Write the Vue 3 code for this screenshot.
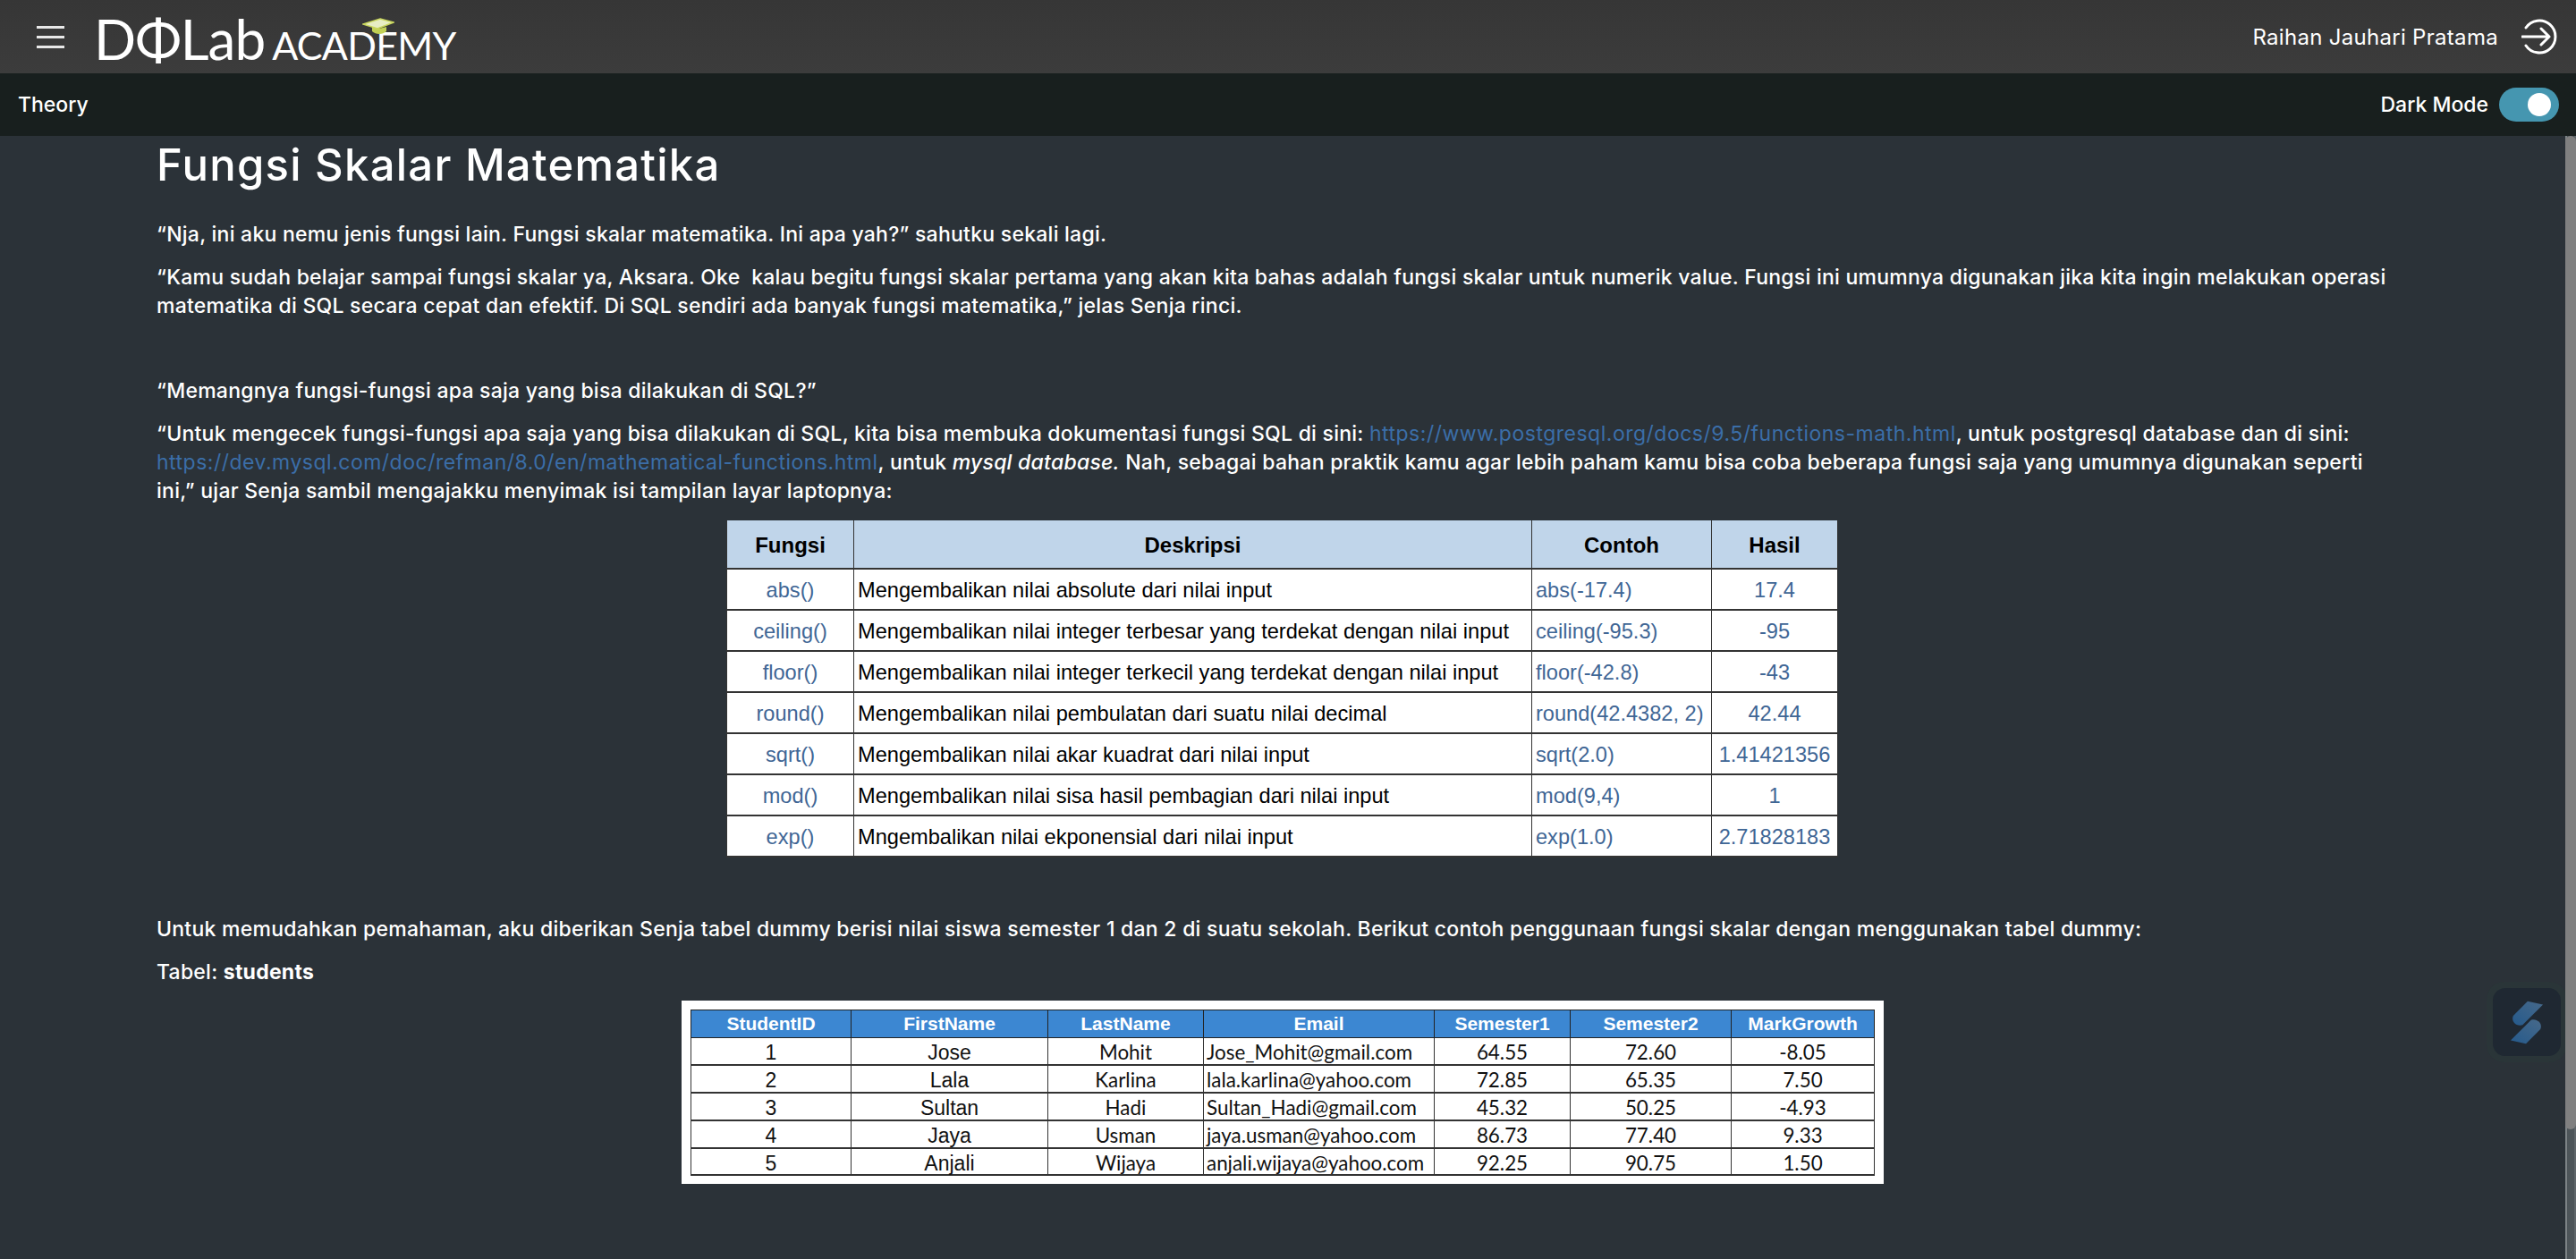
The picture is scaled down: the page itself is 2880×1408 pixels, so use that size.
<script setup>
const fnRows = [
  ['abs()', 'Mengembalikan nilai absolute dari nilai input', 'abs(-17.4)', '17.4'],
  ['ceiling()', 'Mengembalikan nilai integer terbesar yang terdekat dengan nilai input', 'ceiling(-95.3)', '-95'],
  ['floor()', 'Mengembalikan nilai integer terkecil yang terdekat dengan nilai input', 'floor(-42.8)', '-43'],
  ['round()', 'Mengembalikan nilai pembulatan dari suatu nilai decimal', 'round(42.4382, 2)', '42.44'],
  ['sqrt()', 'Mengembalikan nilai akar kuadrat dari nilai input', 'sqrt(2.0)', '1.41421356'],
  ['mod()', 'Mengembalikan nilai sisa hasil pembagian dari nilai input', 'mod(9,4)', '1'],
  ['exp()', 'Mngembalikan nilai ekponensial dari nilai input', 'exp(1.0)', '2.71828183'],
]

const students = [
  [1, 'Jose', 'Mohit', 'Jose_Mohit@gmail.com', '64.55', '72.60', '-8.05'],
  [2, 'Lala', 'Karlina', 'lala.karlina@yahoo.com', '72.85', '65.35', '7.50'],
  [3, 'Sultan', 'Hadi', 'Sultan_Hadi@gmail.com', '45.32', '50.25', '-4.93'],
  [4, 'Jaya', 'Usman', 'jaya.usman@yahoo.com', '86.73', '77.40', '9.33'],
  [5, 'Anjali', 'Wijaya', 'anjali.wijaya@yahoo.com', '92.25', '90.75', '1.50'],
]
</script>

<template>
  <div class="page">
    <header class="topbar">
      <div class="brand">
        <button class="burger" aria-label="menu"><span></span><span></span><span></span></button>
        <div class="logo">
          <span class="logo-main">DΦLab</span>
          <span class="logo-sub">ACADEMY</span>
          <svg class="logo-cap" viewBox="0 0 36 20" width="36" height="20">
            <path d="M11 9v6c4 4 12 4 16 0V10l-8 2z" fill="#c3d155" />
            <path d="M20 1 35 5 17 12 1 7z" fill="#e8edc4" stroke="#c9d65e" stroke-width="1.5" />
          </svg>
        </div>
      </div>
      <div class="user">
        <span>Raihan Jauhari Pratama</span>
        <svg viewBox="0 0 40 40" width="40" height="40" fill="none" stroke="#fff" stroke-width="3" stroke-linecap="round" stroke-linejoin="round">
          <path d="M5 10A18 18 0 1 1 5 30" />
          <path d="M1 20H31M22 11l9 9-9 9" />
        </svg>
      </div>
    </header>

    <div class="subbar">
      <span class="theory">Theory</span>
      <div class="mode">
        <span>Dark Mode</span>
        <div class="toggle"><i></i></div>
      </div>
    </div>

    <main class="content">
      <article class="article">
        <h1>Fungsi Skalar Matematika</h1>
        <p>“Nja, ini aku nemu jenis fungsi lain. Fungsi skalar matematika. Ini apa yah?” sahutku sekali lagi.</p>
        <p>“Kamu sudah belajar sampai fungsi skalar ya, Aksara. Oke&nbsp; kalau begitu fungsi skalar pertama yang akan kita bahas adalah fungsi skalar untuk numerik value. Fungsi ini umumnya digunakan jika kita ingin melakukan operasi<br>matematika di SQL secara cepat dan efektif. Di SQL sendiri ada banyak fungsi matematika,” jelas Senja rinci.</p>
        <p class="gap">“Memangnya fungsi-fungsi apa saja yang bisa dilakukan di SQL?”</p>
        <p>“Untuk mengecek fungsi-fungsi apa saja yang bisa dilakukan di SQL, kita bisa membuka dokumentasi fungsi SQL di sini: <a>https://www.postgresql.org/docs/9.5/functions-math.html</a>, untuk postgresql database dan di sini:<br><a>https://dev.mysql.com/doc/refman/8.0/en/mathematical-functions.html</a>, untuk <em>mysql database.</em> Nah, sebagai bahan praktik kamu agar lebih paham kamu bisa coba beberapa fungsi saja yang umumnya digunakan seperti<br>ini,” ujar Senja sambil mengajakku menyimak isi tampilan layar laptopnya:</p>

        <table class="fn-table">
          <thead>
            <tr><th>Fungsi</th><th>Deskripsi</th><th>Contoh</th><th>Hasil</th></tr>
          </thead>
          <tbody>
            <tr v-for="row in fnRows" :key="row[0]">
              <td class="blue center">{{ row[0] }}</td>
              <td>{{ row[1] }}</td>
              <td class="blue">{{ row[2] }}</td>
              <td class="blue center">{{ row[3] }}</td>
            </tr>
          </tbody>
        </table>

        <p class="after-table">Untuk memudahkan pemahaman, aku diberikan Senja tabel dummy berisi nilai siswa semester 1 dan 2 di suatu sekolah. Berikut contoh penggunaan fungsi skalar dengan menggunakan tabel dummy:</p>
        <p>Tabel: <strong>students</strong></p>

        <div class="students-wrap">
          <table class="students">
            <thead>
              <tr><th>StudentID</th><th>FirstName</th><th>LastName</th><th>Email</th><th>Semester1</th><th>Semester2</th><th>MarkGrowth</th></tr>
            </thead>
            <tbody>
              <tr v-for="s in students" :key="s[0]">
                <td class="center">{{ s[0] }}</td>
                <td class="center">{{ s[1] }}</td>
                <td class="center calibri">{{ s[2] }}</td>
                <td class="calibri">{{ s[3] }}</td>
                <td class="center calibri">{{ s[4] }}</td>
                <td class="center calibri">{{ s[5] }}</td>
                <td class="center calibri">{{ s[6] }}</td>
              </tr>
            </tbody>
          </table>
        </div>
      </article>

      <div class="widget">
        <div class="widget-inner">
          <svg viewBox="0 0 40 52" width="38" height="51">
            <defs>
              <linearGradient id="sg" x1="0" y1="1" x2="1" y2="0">
                <stop offset="0" stop-color="#255a8c" />
                <stop offset="1" stop-color="#47698a" />
              </linearGradient>
            </defs>
            <path d="M21 1 39 5 15 29C8 31 1 25 4 18z" fill="url(#sg)" />
            <path d="M19 51 1 47 25 23C32 21 39 27 36 34z" fill="url(#sg)" />
          </svg>
        </div>
      </div>

      <div class="scrollbar"><div class="thumb"></div></div>
    </main>
  </div>
</template>

<style scoped>
.page {
  height: 1408px;
  display: flex;
  flex-direction: column;
  font-family: Inter, "Noto Sans", sans-serif;
  color: #fff;
  background: #2b3238;
  overflow: hidden;
}

.topbar {
  height: 82px;
  flex: none;
  display: flex;
  align-items: center;
  justify-content: space-between;
  padding: 0 21px 0 41px;
  background: linear-gradient(#363636, #3c3c3c);
}

.brand {
  display: flex;
  align-items: center;
  gap: 33px;
}

.burger {
  all: unset;
  width: 31px;
  display: flex;
  flex-direction: column;
  gap: 8px;
}

.burger span {
  height: 3px;
  background: #e8e8e8;
}

.logo {
  position: relative;
  display: flex;
  align-items: baseline;
  gap: 8px;
  color: #fff;
  font-family: Lato, sans-serif;
  font-weight: 400;
  white-space: nowrap;
  padding-top: 4px;
}

.logo-main {
  font-size: 62px;
  line-height: 62px;
  letter-spacing: -1px;
}

.logo-sub {
  font-size: 43px;
  line-height: 43px;
  letter-spacing: -0.7px;
}

.logo-cap {
  position: absolute;
  left: 300px;
  top: 12px;
}

.user {
  display: flex;
  align-items: center;
  gap: 26px;
  font-size: 24px;
  letter-spacing: 0.3px;
}

.subbar {
  height: 70px;
  flex: none;
  display: flex;
  align-items: center;
  justify-content: space-between;
  padding: 0 19px 0 20px;
  background: #181f1e;
  font-size: 23px;
  font-weight: 500;
}

.mode {
  display: flex;
  align-items: center;
  gap: 12px;
}

.toggle {
  width: 67px;
  height: 38px;
  border-radius: 19px;
  background: #4596b0;
  display: flex;
  align-items: center;
  justify-content: flex-end;
  padding-right: 9px;
  box-sizing: border-box;
}

.toggle i {
  width: 26px;
  height: 26px;
  border-radius: 50%;
  background: #fff;
}

.content {
  position: relative;
  flex: 1;
  min-height: 0;
  overflow: hidden;
}

.article {
  box-sizing: border-box;
  padding: 6px 175px 0 175px;
  white-space: nowrap;
}

h1 {
  margin: 0 0 34px;
  font-size: 49px;
  line-height: 54px;
  font-weight: 500;
  letter-spacing: 1.25px;
}

p {
  margin: 0 0 16px;
  font-size: 23px;
  line-height: 32px;
  font-weight: 500;
  letter-spacing: 0.25px;
}

.gap {
  margin-top: 63px;
}

a {
  color: #3b6ea8;
  font-weight: 400;
  letter-spacing: 0.5px;
}

.fn-table {
  margin: 17px 0 0 637px;
  width: 1243px;
  border-collapse: collapse;
  table-layout: fixed;
  background: #fff;
  color: #000;
  font-family: "Liberation Sans", Arial, sans-serif;
  font-size: 23.6px;
  line-height: 26px;
}

.fn-table th {
  height: 54px;
  box-sizing: border-box;
  background: #c0d5ea;
  border: 1px solid #333;
  border-top: 0;
  border-bottom-width: 2px;
  font-size: 24px;
  padding: 2px 0 0;
}

.fn-table th:nth-child(1) { width: 142px; }
.fn-table th:nth-child(2) { width: 758px; }
.fn-table th:nth-child(3) { width: 201px; }

.fn-table td {
  height: 46px;
  padding: 2px 4px 0;
  box-sizing: border-box;
  border: 1px solid #333;
  border-bottom-width: 2px;
  white-space: nowrap;
  overflow: hidden;
}

.center {
  text-align: center;
}

.fn-table .blue {
  color: #3f6695;
}

.after-table {
  margin-top: 64px;
}

.students-wrap {
  margin: 16px 0 0 587px;
  width: 1344px;
  height: 205px;
  padding: 10px;
  box-sizing: border-box;
  background: #fff;
}

.students {
  width: 100%;
  border-collapse: collapse;
  table-layout: fixed;
  color: #111;
  font-family: "Liberation Sans", Arial, sans-serif;
  font-size: 23px;
  line-height: 24px;
}

.students th {
  height: 31px;
  box-sizing: border-box;
  padding: 0;
  background: #3c87d2;
  color: #fff;
  font-size: 21px;
  border: 1px solid #222;
}

.students th:nth-child(1) { width: 179px; }
.students th:nth-child(2) { width: 220px; }
.students th:nth-child(3) { width: 174px; }
.students th:nth-child(4) { width: 258px; }
.students th:nth-child(5) { width: 152px; }
.students th:nth-child(6) { width: 180px; }

.students td {
  height: 30.8px;
  padding: 3px 3px 0;
  box-sizing: border-box;
  border: 1px solid #333;
  border-bottom-width: 2px;
  white-space: nowrap;
}

.students .calibri {
  font-family: Lato, sans-serif;
  font-size: 22.4px;
}

.widget {
  position: absolute;
  top: 946px;
  right: 10px;
  width: 90px;
  height: 90px;
  padding: 7px;
  box-sizing: border-box;
  border-radius: 20px;
  background: #2a3538;
}

.widget-inner {
  width: 76px;
  height: 76px;
  border-radius: 14px;
  background: #1f2832;
  display: flex;
  align-items: center;
  justify-content: center;
}

.scrollbar {
  position: absolute;
  top: 0;
  right: 0;
  bottom: 0;
  width: 12px;
  background: linear-gradient(90deg, #7d8386 0 2px, #4d5559 2px 10px, #5f666a 10px);
}

.thumb {
  height: 1111px;
  border-radius: 6px;
  background: #808080;
}
</style>
